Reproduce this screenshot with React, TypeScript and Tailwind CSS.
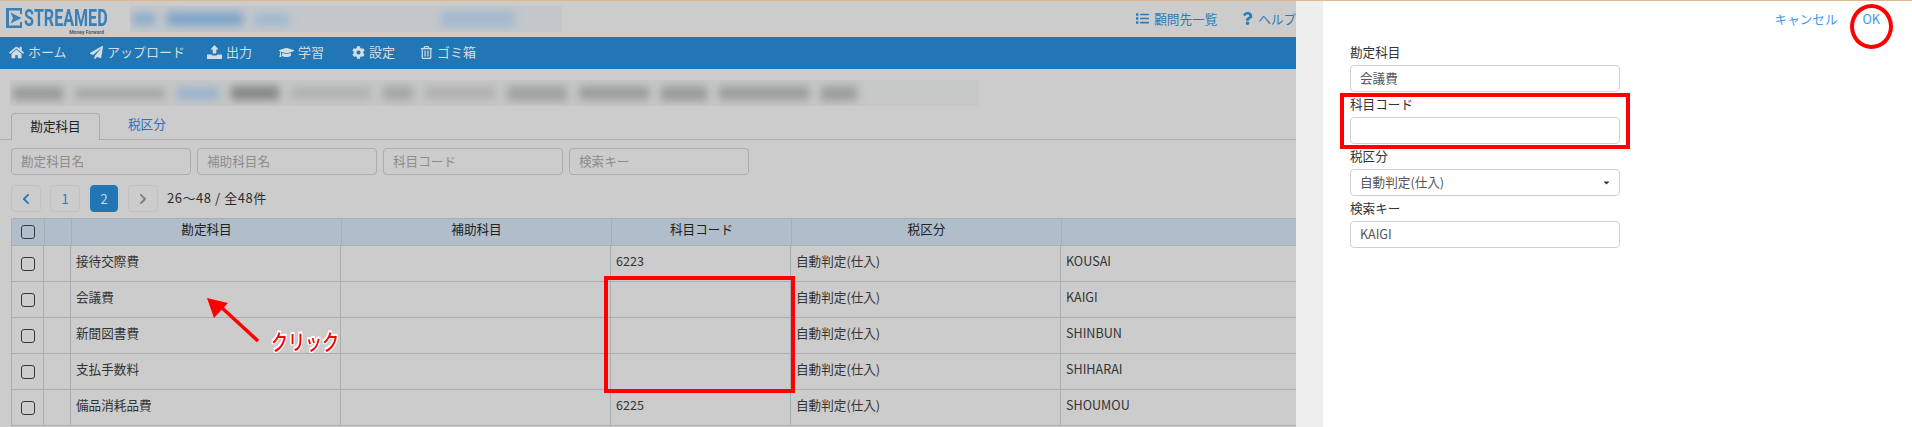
import React from "react";
import {
  FaHome,
  FaPaperPlane,
  FaGraduationCap,
  FaCog,
  FaRegTrashAlt,
  FaList,
  FaQuestion,
  FaChevronLeft,
  FaChevronRight,
  FaCaretDown,
} from "react-icons/fa";

const FONT = { fontFamily: '"Noto Sans CJK JP", "Noto Sans", sans-serif' };

const UploadIcon = () => (
  <svg width="15" height="14" viewBox="0 0 15 14" fill="currentColor">
    <path d="M7.5 0 11.5 4.5H9.3V8.5H5.7V4.5H3.5Z" />
    <path d="M0 9.5H4.5L5.5 10.5H9.5L10.5 9.5H15V14H0Z" />
  </svg>
);

const NAV_ITEMS = [
  { label: "ホーム", icon: <FaHome size={15} />, width: "w-[81px]" },
  { label: "アップロード", icon: <FaPaperPlane size={13} />, width: "w-[117px]" },
  { label: "出力", icon: <UploadIcon />, width: "w-[72px]" },
  { label: "学習", icon: <FaGraduationCap size={15} />, width: "w-[73px]" },
  { label: "設定", icon: <FaCog size={13} />, width: "w-[68px]" },
  { label: "ゴミ箱", icon: <FaRegTrashAlt size={13} />, width: "w-[70px]" },
];

const ROWS = [
  { name: "接待交際費", code: "6223", key: "KOUSAI" },
  { name: "会議費", code: "", key: "KAIGI" },
  { name: "新聞図書費", code: "", key: "SHINBUN" },
  { name: "支払手数料", code: "", key: "SHIHARAI" },
  { name: "備品消耗品費", code: "6225", key: "SHOUMOU" },
];

const Checkbox = () => (
  <span className="block h-[14px] w-[14px] rounded-[3px] border border-[#33383d] bg-transparent" />
);

const Filter = ({ label }: { label: string }) => (
  <div className="flex h-[27px] w-[180px] items-center rounded-[4px] border border-[#a9aeb3] pl-[9px] text-[12.6px] text-[#8d8d8d]">
    {label}
  </div>
);

const PageButton = ({
  children,
  active,
  width = "w-[30px]",
}: {
  children: React.ReactNode;
  active?: boolean;
  width?: string;
}) => (
  <div
    className={`flex h-[27px] ${width} items-center justify-center rounded-[4px] border text-[13px] ${
      active
        ? "border-[#2176b5] bg-[#2176b5] text-[#c9d8e4]"
        : "border-[#c0c1c2] text-[#2d7ab5]"
    }`}
  >
    {children}
  </div>
);

const Field = ({
  label,
  value,
  select,
}: {
  label: string;
  value?: string;
  select?: boolean;
}) => (
  <div className="w-[270px]">
    <div className="flex h-[25px] items-center text-[12.6px] leading-none text-[#333333]">
      {label}
    </div>
    <div className="flex h-[27px] items-center justify-between rounded-[4px] border border-[#cfd1d3] bg-white pl-[9px] pr-[8px] text-[12.6px] text-[#555555]">
      <span>{value}</span>
      {select && <FaCaretDown size={9} className="text-[#333333]" />}
    </div>
  </div>
);

export default function App() {
  return (
    <div className="relative h-[427px] w-[1912px] overflow-hidden bg-white" style={FONT}>
      <div className="h-px bg-[#dfb98e]" />
      <div className="flex h-[426px]">
        {/* Page behind the drawer */}
        <div className="w-[1296px] shrink-0 overflow-hidden bg-[#cccccc]">
          <header className="flex h-[36px] items-center">
            <div className="ml-[6px] w-[98px] shrink-0 pt-[5px]">
              <div className="flex h-[20px] items-center gap-[1px] text-[#3a7fb6]">
                <svg width="17" height="20" viewBox="0 0 17 20" className="shrink-0" fill="#3a7fb6">
                  <path d="M0 0H16V6H14V2.5H3V17.5H14V14H16V20H0Z" />
                  <path d="M4.5 4.5 15.5 10 4.5 15.5 7 10Z" />
                </svg>
                <span className="origin-left scale-x-[0.67] whitespace-nowrap text-[24px] font-bold leading-none" style={{ fontFamily: '"Roboto", sans-serif' }}>
                  STREAMED
                </span>
              </div>
              <div className="mt-[1px] whitespace-nowrap text-right text-[5px] font-bold leading-[6px] text-[#55595d]" style={{ fontFamily: '"Roboto", sans-serif' }}>
                Money Forward
              </div>
            </div>
            <div className="ml-[26px] flex h-[26px] w-[437px] items-center overflow-hidden bg-[#c3c7cb]">
              <div className="flex items-center gap-[12px] pl-[3px] blur-[4px]">
                <span className="h-[12px] w-[22px] bg-[#8aaccb]" />
                <span className="h-[14px] w-[76px] bg-[#7fa6c9]" />
                <span className="h-[11px] w-[34px] bg-[#9bb7d0]" />
                <span className="ml-[140px] h-[16px] w-[74px] bg-[#a3bace]" />
              </div>
            </div>
            <div className="ml-[574px] flex items-center gap-[5px] text-[12.6px] text-[#2d7ab5]">
              <FaList size={13} />
              <span className="whitespace-nowrap">顧問先一覧</span>
            </div>
            <div className="ml-[24px] flex items-center gap-[4px] whitespace-nowrap text-[12.6px] text-[#2d7ab5]">
              <FaQuestion size={13} />
              <span>ヘルプ</span>
            </div>
          </header>

          <nav className="flex h-[32px] items-center bg-[#2176b5] pb-[2px] pl-[9px] text-[13px] text-[#d5dde3]">
            {NAV_ITEMS.map((item) => (
              <div key={item.label} className={`flex ${item.width} shrink-0 items-center gap-[4px] whitespace-nowrap`}>
                {item.icon}
                <span>{item.label}</span>
              </div>
            ))}
          </nav>

          <div className="ml-[10px] mt-[11px] h-[26px] w-[969px] overflow-hidden bg-[#c6c7c7]">
            <div className="flex h-[26px] items-center gap-[12px] pl-[3px] blur-[4px]">
              <span className="h-[13px] w-[50px] bg-[#969899]" />
              <span className="h-[11px] w-[90px] bg-[#a4a6a7]" />
              <span className="h-[13px] w-[42px] bg-[#9bb4cc]" />
              <span className="h-[14px] w-[48px] bg-[#858788]" />
              <span className="h-[12px] w-[80px] bg-[#b0b1b2]" />
              <span className="h-[14px] w-[30px] bg-[#a4a5a6]" />
              <span className="h-[12px] w-[70px] bg-[#aeafb0]" />
              <span className="h-[15px] w-[60px] bg-[#a0a1a2]" />
              <span className="h-[14px] w-[70px] bg-[#9c9d9e]" />
              <span className="h-[15px] w-[46px] bg-[#9a9b9c]" />
              <span className="h-[14px] w-[90px] bg-[#9c9e9e]" />
              <span className="h-[15px] w-[36px] bg-[#9c9e9e]" />
            </div>
          </div>

          <div className="mt-[7px] flex h-[27px] items-end border-b border-[#a9aeb3] pl-[11px] text-[12.6px]">
            <div className="-mb-px flex h-[27px] w-[89px] items-center justify-center rounded-t-[4px] border border-b-0 border-[#a9aeb3] bg-[#cccccc] pb-[2px] text-[#222222]">
              勘定科目
            </div>
            <div className="flex h-[27px] items-center pb-[2px] pl-[28px] text-[#2d6fc0]">税区分</div>
          </div>

          <div className="ml-[11px] mt-[8px] flex gap-[6px]">
            <Filter label="勘定科目名" />
            <Filter label="補助科目名" />
            <Filter label="科目コード" />
            <Filter label="検索キー" />
          </div>

          <div className="ml-[11px] mt-[10px] flex items-center">
            <PageButton><FaChevronLeft size={12} /></PageButton>
            <div className="ml-[9px]"><PageButton>1</PageButton></div>
            <div className="ml-[10px]"><PageButton active width="w-[28px]">2</PageButton></div>
            <div className="ml-[10px] text-[#808080]"><PageButton><FaChevronRight size={12} className="text-[#808080]" /></PageButton></div>
            <span className="ml-[9px] pb-[2px] text-[13px] tracking-[0.55px] text-[#2b2b2b]">26〜48 / 全48件</span>
          </div>

          <div className="ml-[11px] mt-[6px] w-[1285px] rounded-tl-[3px] border-t border-[#a9aeb3] text-[12.6px]">
            <div className="grid h-[27px] grid-cols-[33px_27px_270px_270px_180px_270px_1fr] border-b border-[#a9aeb3] bg-[#b0bdca] text-[#222222]">
              <div className="flex items-center justify-center border-l border-[#a9aeb3]"><Checkbox /></div>
              <div className="border-l border-[#a9aeb3]" />
              <div className="flex items-start justify-center border-l border-[#a9aeb3] pt-[1px]">勘定科目</div>
              <div className="flex items-start justify-center border-l border-[#a9aeb3] pt-[1px]">補助科目</div>
              <div className="flex items-start justify-center border-l border-[#a9aeb3] pt-[1px]">科目コード</div>
              <div className="flex items-start justify-center border-l border-[#a9aeb3] pt-[1px]">税区分</div>
              <div className="border-l border-[#a9aeb3]" />
            </div>
            {ROWS.map((row) => (
              <div
                key={row.name}
                className="grid h-[36px] grid-cols-[32px_27px_270px_270px_180px_270px_1fr] border-b border-[#a9aeb3] text-[#333333]"
              >
                <div className="flex items-center justify-center border-l border-[#a9aeb3]"><Checkbox /></div>
                <div className="border-l border-[#a9aeb3]" />
                <div className="border-l border-[#a9aeb3] pl-[5px] pt-[6px]">{row.name}</div>
                <div className="border-l border-[#a9aeb3]" />
                <div className="border-l border-[#a9aeb3] pl-[5px] pt-[6px]">{row.code}</div>
                <div className="whitespace-nowrap border-l border-[#a9aeb3] pl-[5px] pt-[6px]">自動判定(仕入)</div>
                <div className="border-l border-[#a9aeb3] pl-[5px] pt-[6px]">{row.key}</div>
              </div>
            ))}
          </div>
        </div>

        <div className="w-[27px] shrink-0 bg-[#eeeeee]" />

        {/* Drawer */}
        <aside className="flex-1 bg-white pl-[27px]">
          <div className="flex h-[39px] items-center justify-end pb-[3px] pr-[32px] text-[12.6px] text-[#3d99e8]">
            <span>キャンセル</span>
            <span className="ml-[25px]">OK</span>
          </div>
          <Field label="勘定科目" value="会議費" />
          <Field label="科目コード" />
          <Field label="税区分" value="自動判定(仕入)" select />
          <Field label="検索キー" value="KAIGI" />
        </aside>
      </div>

      {/* Annotations */}
      <div className="absolute left-[604px] top-[276px] h-[117px] w-[191px] border-[4px] border-[#ff0000]" />
      <div className="absolute left-[1340px] top-[93px] h-[56px] w-[290px] border-[4px] border-[#ff0000]" />
      <div className="absolute left-[1850px] top-[4px] h-[45px] w-[43px] rounded-[50%] border-[4px] border-[#ff0000]" />
      <svg className="absolute left-[200px] top-[290px]" width="65" height="60" viewBox="0 0 65 60">
        <path d="M58 51 20 16" stroke="#ff0000" strokeWidth="3.5" fill="none" />
        <path d="M7 8 28 13 14 28Z" fill="#ff0000" />
      </svg>
      <span
        className="absolute left-[271px] top-[327px] origin-top-left scale-y-[1.25] text-[17px] font-medium leading-[22px] text-[#ff0000] [text-shadow:1px_0_0_#fff,-1px_0_0_#fff,0_1px_0_#fff,0_-1px_0_#fff,1px_1px_0_#fff,-1px_-1px_0_#fff,1px_-1px_0_#fff,-1px_1px_0_#fff]"
      >
        クリック
      </span>
    </div>
  );
}
